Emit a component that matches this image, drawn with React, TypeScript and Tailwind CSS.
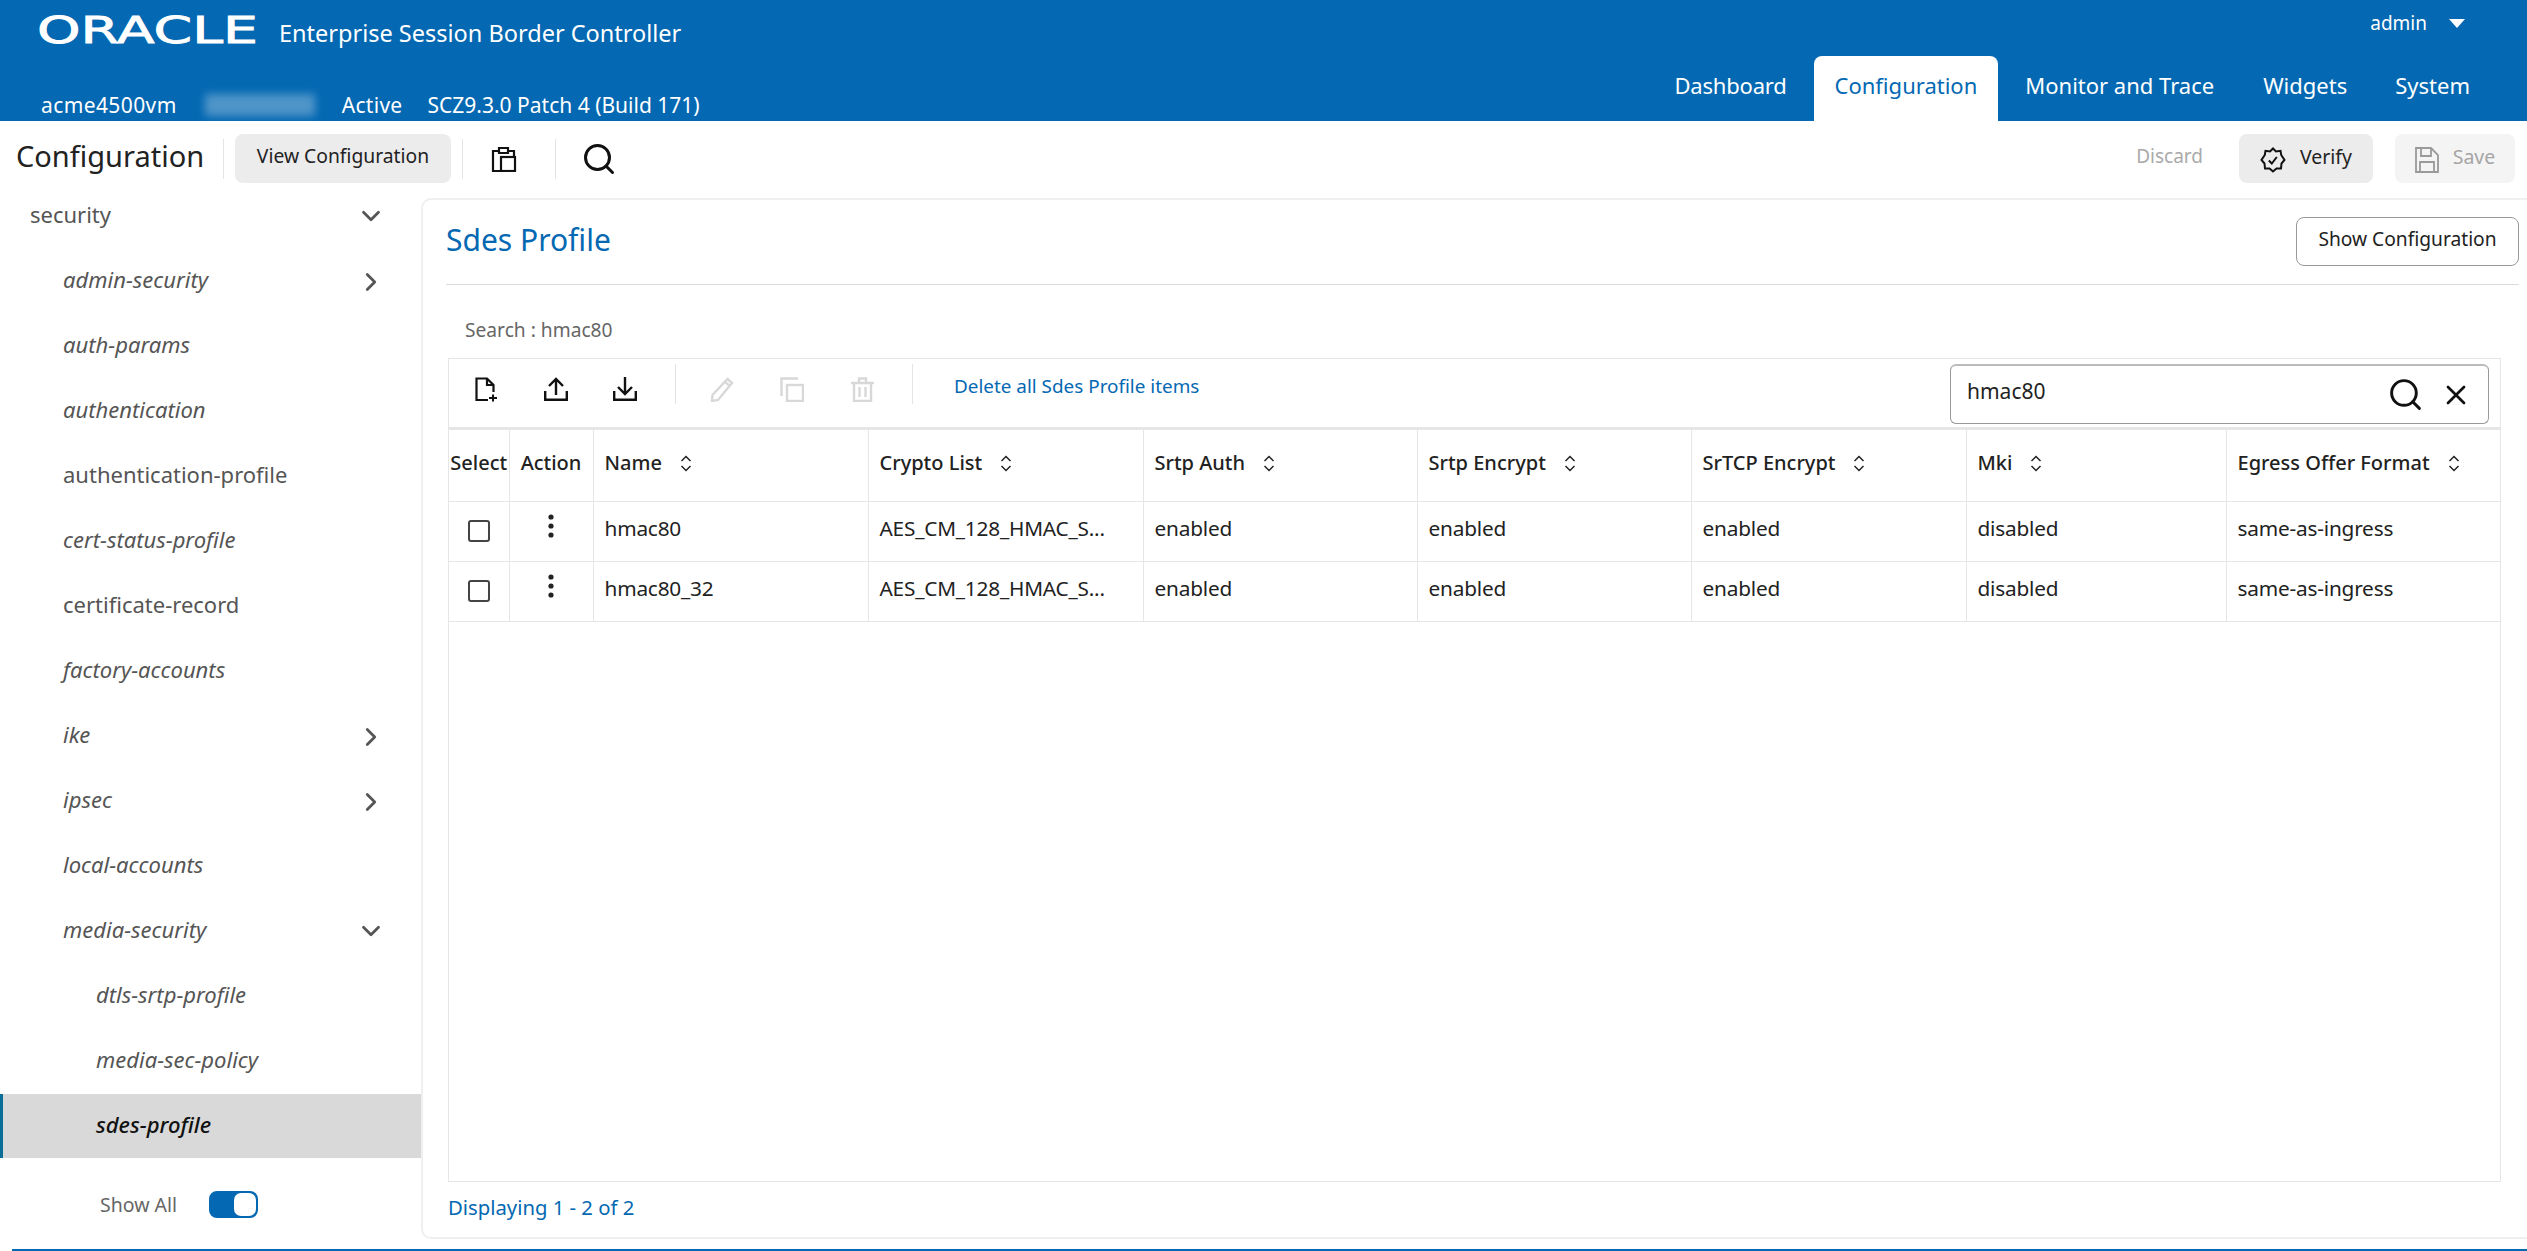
import { ChevronDown, ChevronRight, Search, X } from "lucide-react";

const blue = "text-[#0468b2]";

const navItems = [
  { label: "security", indent: "pl-[30px]", arrow: "down" },
  { label: "admin-security", indent: "pl-[63px]", italic: true, arrow: "right" },
  { label: "auth-params", indent: "pl-[63px]", italic: true },
  { label: "authentication", indent: "pl-[63px]", italic: true },
  { label: "authentication-profile", indent: "pl-[63px]" },
  { label: "cert-status-profile", indent: "pl-[63px]", italic: true },
  { label: "certificate-record", indent: "pl-[63px]" },
  { label: "factory-accounts", indent: "pl-[63px]", italic: true },
  { label: "ike", indent: "pl-[63px]", italic: true, arrow: "right" },
  { label: "ipsec", indent: "pl-[63px]", italic: true, arrow: "right" },
  { label: "local-accounts", indent: "pl-[63px]", italic: true },
  { label: "media-security", indent: "pl-[63px]", italic: true, arrow: "down" },
  { label: "dtls-srtp-profile", indent: "pl-[96px]", italic: true },
  { label: "media-sec-policy", indent: "pl-[96px]", italic: true },
  { label: "sdes-profile", indent: "pl-[96px]", italic: true, active: true },
];

const columns = [
  { label: "Name", width: "w-[275px]" },
  { label: "Crypto List", width: "w-[275px]" },
  { label: "Srtp Auth", width: "w-[274px]" },
  { label: "Srtp Encrypt", width: "w-[274px]" },
  { label: "SrTCP Encrypt", width: "w-[275px]" },
  { label: "Mki", width: "w-[260px]" },
  { label: "Egress Offer Format", width: "w-[275px]" },
];

const rows = [
  ["hmac80", "AES_CM_128_HMAC_S...", "enabled", "enabled", "enabled", "disabled", "same-as-ingress"],
  ["hmac80_32", "AES_CM_128_HMAC_S...", "enabled", "enabled", "enabled", "disabled", "same-as-ingress"],
];

function SortIcon() {
  return (
    <svg width="12" height="17" viewBox="0 0 12 17" fill="none" stroke="#222" strokeWidth="1.5" className="ml-[18px] shrink-0">
      <path d="M1.500 6 6 1.500 10.500 6M1.500 11 6 15.500 10.500 11" />
    </svg>
  );
}

function Kebab() {
  return (
    <svg width="6" height="24" viewBox="0 0 6 24" fill="#222" className="mx-auto -mt-[11px]">
      <circle cx="3" cy="3" r="2.6" />
      <circle cx="3" cy="12" r="2.6" />
      <circle cx="3" cy="21" r="2.6" />
    </svg>
  );
}

function Sep({ className = "" }: { className?: string }) {
  return <div className={"w-px h-[40px] bg-[#e4e4e4] shrink-0 " + className} />;
}

export default function App() {
  return (
    <div className="flex flex-col w-full h-screen overflow-hidden bg-white font-['Noto_Sans',sans-serif] text-[#222]">
      {/* Header */}
      <header className="flex justify-between h-[121px] shrink-0 bg-[#0468b2] text-white">
        <div className="flex flex-col pl-[37px]">
          <div className="flex items-start h-[90px]">
            <svg width="221" height="48" viewBox="0 0 221 48" aria-label="Oracle logo" className="shrink-0 overflow-visible">
              <text x="0" y="43" fontFamily="DejaVu Sans" fontSize="37" fill="#fff" stroke="#fff" strokeWidth="0.8" textLength="221" lengthAdjust="spacingAndGlyphs">
                ORACLE
              </text>
            </svg>
            <span className="ml-[21px] mt-[16px] text-[23.500px] leading-[34px] whitespace-nowrap">Enterprise Session Border Controller</span>
          </div>
          <div className="flex items-center pl-[4px] text-[21px] leading-[30px] whitespace-nowrap">
            <span className="tracking-[0.4px]">acme4500vm</span>
            <div className="w-[110px] h-[22px] ml-[28px] mr-[27px] bg-white/30 blur-[4px]" />
            <span className="tracking-[0.3px]">Active</span>
            <span className="ml-[25px]">SCZ9.3.0 Patch 4 (Build 171)</span>
          </div>
        </div>
        <div className="flex flex-col items-end pr-[57px]">
          <div className="flex items-center h-[46px] pr-[5px] text-[19px]">
            <span>admin</span>
            <span className="ml-[22px] w-0 h-0 border-x-[8px] border-x-transparent border-t-[9px] border-t-white" />
          </div>
          <nav className="flex items-stretch h-[65px] mt-[10px] text-[22px] whitespace-nowrap">
            <a className="flex items-center mr-[27px] pb-[6px] tracking-[-0.2px]">Dashboard</a>
            <a className="flex items-center px-[21px] pb-[6px] bg-white rounded-t-[8px] text-[#0468b2]">Configuration</a>
            <a className="flex items-center ml-[27px] pb-[6px]">Monitor and Trace</a>
            <a className="flex items-center ml-[49px] pb-[6px]">Widgets</a>
            <a className="flex items-center ml-[48px] pb-[6px]">System</a>
          </nav>
        </div>
      </header>

      {/* Page toolbar */}
      <div className="flex items-start justify-between h-[63px] shrink-0 pt-[13px] pr-[12px]">
        <div className="flex items-center">
          <span className="pl-[16px] pb-[6px] w-[223px] text-[29px] leading-[43px]">Configuration</span>
          <Sep />
          <button className="ml-[11px] w-[216px] h-[49px] pb-[4px] rounded-[8px] bg-[#ececec] text-[19.300px]">View Configuration</button>
          <Sep className="ml-[11px]" />
          <div className="flex justify-center w-[82px] pr-[1px]">
            <svg width="26" height="26" viewBox="0 0 26 26" fill="none" stroke="#111" strokeWidth="2.2">
              <path d="M8 5H2v20h7M8 7V2h9v5zM17 5h6v6" />
              <rect x="10" y="11" width="14" height="14" />
            </svg>
          </div>
          <Sep className="ml-[10px]" />
          <Search size={36} strokeWidth={2} className="ml-[25px] text-[#111]" />
        </div>
        <div className="flex items-center">
          <span className="pb-[4px] text-[19px] text-[#aaa]">Discard</span>
          <button className="flex items-center justify-center gap-[14px] ml-[36px] w-[134px] h-[49px] rounded-[8px] bg-[#ececec] text-[19.500px]">
            <svg width="26" height="26" viewBox="0 0 26 26" fill="none" stroke="#111" strokeWidth="2" className="mt-[3px]">
              <path d="M13 1.500 16 4.500 20.500 3.800 21.200 8 24.500 13 21.500 16.500 21 21.500 16.500 21.500 13 24.500 9.500 21.500 5 21.500 4.500 16.500 1.500 13 4.800 8 5.500 3.800 10 4.500Z" />
              <path d="m8.800 13.500 3 3 5-6.500" />
            </svg>
            <span className="pb-[4px]">Verify</span>
          </button>
          <button className="flex items-center justify-center gap-[14px] ml-[22px] w-[120px] h-[49px] rounded-[8px] bg-[#f4f4f4] text-[19.500px] text-[#a5a5a5]">
            <svg width="24" height="26" viewBox="0 0 24 26" fill="none" stroke="#9a9a9a" strokeWidth="1.8" className="mt-[3px]">
              <path d="M1 1h15l7 7v17H1zM6 1v8h10V1M5 25V15h14v10" />
            </svg>
            <span className="pb-[4px]">Save</span>
          </button>
        </div>
      </div>

      {/* Body */}
      <div className="flex flex-1 min-h-0">
        <aside className="flex flex-col w-[421px] shrink-0 text-[22px] text-[#555]">
          {navItems.map((item) => (
            <div
              key={item.label}
              className={
                "flex items-center justify-between h-[64px] mb-px pr-[35px] " +
                item.indent +
                (item.italic ? " italic" : "") +
                (item.active ? " bg-[#d9d9d9] border-l-[3px] border-l-[#0a6f97] !pl-[93px] text-[#111] font-medium" : "")
              }
            >
              <span className="pb-[3px]">{item.label}</span>
              {item.arrow === "down" && <ChevronDown size={30} strokeWidth={2.2} />}
              {item.arrow === "right" && <ChevronRight size={30} strokeWidth={2.2} className="mt-[2px]" />}
            </div>
          ))}
          <div className="flex items-center h-[90px] pt-[1px] pl-[100px]">
            <span className="text-[19.500px] text-[#666]">Show All</span>
            <div className="flex justify-end ml-[32px] w-[49px] h-[27px] p-[2px] rounded-[8px] bg-[#0468b2]">
              <div className="w-[22px] h-full rounded-[7px] bg-white" />
            </div>
          </div>
        </aside>

        <main className="flex-1 min-w-0 pt-[14px] pb-[10px]">
          <section className="flex flex-col h-full border-t-2 border-l-2 border-b-2 border-[#efefef] rounded-tl-[10px] rounded-bl-[10px]">
            <div className="flex items-center justify-between h-[85px] shrink-0 ml-[23px] mr-[8px] border-b border-[#dcdcdc]">
              <h1 className={"pb-[5px] text-[30px] " + blue}>Sdes Profile</h1>
              <button className="w-[223px] h-[49px] -mt-[2px] pb-[3px] rounded-[8px] border border-[#999] text-[19.200px]">Show Configuration</button>
            </div>
            <div className="flex items-end h-[73px] shrink-0 pb-[16px] pl-[42px] text-[19.200px] leading-[24px] text-[#666]">Search : hmac80</div>
            <div className="flex flex-col h-[824px] shrink-0 ml-[25px] mr-[26px] border border-[#e6e6e6]">
              <div className="flex items-start justify-between h-[71px] shrink-0 pt-[5px] border-b-[3px] border-[#e6e6e6]">
                <div className="flex items-start pl-[3px]">
                  <button className="flex items-center justify-center w-[69px] h-[50px]">
                    <svg width="23" height="25" viewBox="0 0 23 25" fill="none" stroke="#111" strokeWidth="2.2">
                      <path d="M13 23H1.500V1.500H12L18.500 8V15M12 1.500V8H18.500" />
                      <path d="M14 21h8M18 17.500v7" strokeWidth="2" />
                    </svg>
                  </button>
                  <button className="flex items-center justify-center w-[69px] h-[50px]">
                    <svg width="24" height="24" viewBox="0 0 24 24" fill="none" stroke="#111" strokeWidth="2.4">
                      <path d="M1.200 14v8.800h21.600V14M12 18V2M5 9l7-7 7 7" />
                    </svg>
                  </button>
                  <button className="flex items-center justify-center w-[69px] h-[50px]">
                    <svg width="24" height="24" viewBox="0 0 24 24" fill="none" stroke="#111" strokeWidth="2.4">
                      <path d="M1.200 14v8.800h21.600V14M12 0v16M5 10l7 7 7-7" />
                    </svg>
                  </button>
                  <Sep className="ml-[16px]" />
                  <button className="flex items-center justify-center ml-[11px] w-[70px] h-[50px]">
                    <svg width="24" height="25" viewBox="0 0 24 25" fill="none" stroke="#d8d8d8" strokeWidth="2.4">
                      <path d="M17.500 2 22 6 8 23l-6 1 .5-6zM15 5l5 4" />
                    </svg>
                  </button>
                  <button className="flex items-center justify-center w-[70px] h-[50px]">
                    <svg width="24" height="25" viewBox="0 0 24 25" fill="none" stroke="#d8d8d8" strokeWidth="2.4">
                      <path d="M18 1.500H1.500V19" />
                      <rect x="7" y="8" width="16" height="16" />
                    </svg>
                  </button>
                  <button className="flex items-center justify-center w-[70px] h-[50px]">
                    <svg width="23" height="25" viewBox="0 0 23 25" fill="none" stroke="#d8d8d8" strokeWidth="2.4">
                      <path d="M0 6h23M3 6v18h17V6M8 6V1.500h7V6M8.500 10v10M14.500 10v10" />
                    </svg>
                  </button>
                  <Sep className="ml-[15px]" />
                  <a className={"ml-[41px] flex items-center h-[45px] text-[18.900px] whitespace-nowrap " + blue}>Delete all Sdes Profile items</a>
                </div>
                <div className="flex items-center w-[539px] h-[60px] mr-[11px] pl-[16px] pr-[16px] rounded-[6px] border border-[#999] border-t-2 border-t-[#bbb]">
                  <span className="flex-1 pb-[6px] text-[21px]">hmac80</span>
                  <Search size={37} strokeWidth={1.900} className="text-[#111]" />
                  <X size={32} strokeWidth={2} className="ml-[16px] text-[#111]" />
                </div>
              </div>
              <table className="w-full table-fixed border-collapse text-[20.800px]">
                <thead>
                  <tr className="h-[71px] border-b border-[#e6e6e6] text-[20px]">
                    <th className="w-[60px] border-r border-[#e6e6e6] text-center font-medium pb-[4px]">Select</th>
                    <th className="w-[84px] border-r border-[#e6e6e6] text-center font-medium pb-[4px]">Action</th>
                    {columns.map((col) => (
                      <th key={col.label} className={col.width + " border-r last:border-r-0 border-[#e6e6e6] pl-[11px] pb-[4px] text-left font-medium"}>
                        <div className="flex items-center whitespace-nowrap">
                          {col.label}
                          <SortIcon />
                        </div>
                      </th>
                    ))}
                  </tr>
                </thead>
                <tbody>
                  {rows.map((row) => (
                    <tr key={row[0]} className="h-[60px] border-b border-[#e6e6e6]">
                      <td className="border-r border-[#e6e6e6]">
                        <div className="mx-auto w-[22px] h-[22px] rounded-[3px] border-2 border-[#444]" />
                      </td>
                      <td className="border-r border-[#e6e6e6]">
                        <Kebab />
                      </td>
                      {row.map((cell, i) => (
                        <td key={i} className="border-r last:border-r-0 border-[#e6e6e6] pl-[11px] pb-[5px] whitespace-nowrap tracking-[-0.2px]">
                          {cell}
                        </td>
                      ))}
                    </tr>
                  ))}
                </tbody>
              </table>
            </div>
            <div className={"ml-[25px] mt-[11px] text-[20.300px] leading-[28px] " + blue}>Displaying 1 - 2 of 2</div>
          </section>
        </main>
      </div>
      <div className="h-[2px] ml-[12px] shrink-0 bg-[#0468b2]" />
    </div>
  );
}
